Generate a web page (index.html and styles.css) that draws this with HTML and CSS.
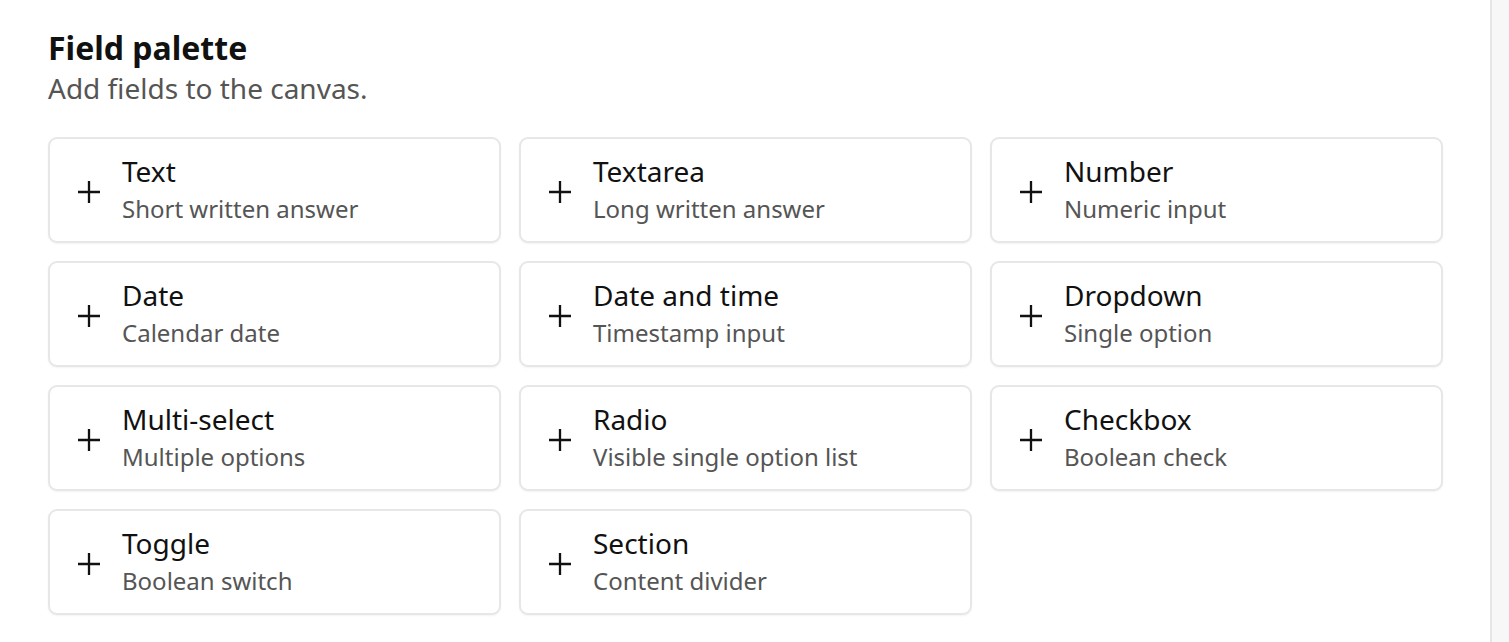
FILE: index.html
```html
<!DOCTYPE html>
<html lang="en">
<head>
<meta charset="utf-8">
<title>Field palette</title>
<link rel="stylesheet" href="styles.css">
</head>
<body>
<div class="layout">
  <aside class="panel">
    <header class="panel-head">
      <h1 class="panel-title">Field palette</h1>
      <p class="panel-sub">Add fields to the canvas.</p>
    </header>
    <div class="grid">
      <button class="card"><svg class="plus" viewBox="0 0 22 22"><path d="M11 0v22M0 11h22"/></svg><span class="card-text"><span class="card-title">Text</span><span class="card-desc">Short written answer</span></span></button>
      <button class="card"><svg class="plus" viewBox="0 0 22 22"><path d="M11 0v22M0 11h22"/></svg><span class="card-text"><span class="card-title">Textarea</span><span class="card-desc">Long written answer</span></span></button>
      <button class="card"><svg class="plus" viewBox="0 0 22 22"><path d="M11 0v22M0 11h22"/></svg><span class="card-text"><span class="card-title">Number</span><span class="card-desc">Numeric input</span></span></button>
      <button class="card"><svg class="plus" viewBox="0 0 22 22"><path d="M11 0v22M0 11h22"/></svg><span class="card-text"><span class="card-title">Date</span><span class="card-desc">Calendar date</span></span></button>
      <button class="card"><svg class="plus" viewBox="0 0 22 22"><path d="M11 0v22M0 11h22"/></svg><span class="card-text"><span class="card-title">Date and time</span><span class="card-desc">Timestamp input</span></span></button>
      <button class="card"><svg class="plus" viewBox="0 0 22 22"><path d="M11 0v22M0 11h22"/></svg><span class="card-text"><span class="card-title">Dropdown</span><span class="card-desc">Single option</span></span></button>
      <button class="card"><svg class="plus" viewBox="0 0 22 22"><path d="M11 0v22M0 11h22"/></svg><span class="card-text"><span class="card-title">Multi-select</span><span class="card-desc">Multiple options</span></span></button>
      <button class="card"><svg class="plus" viewBox="0 0 22 22"><path d="M11 0v22M0 11h22"/></svg><span class="card-text"><span class="card-title">Radio</span><span class="card-desc">Visible single option list</span></span></button>
      <button class="card"><svg class="plus" viewBox="0 0 22 22"><path d="M11 0v22M0 11h22"/></svg><span class="card-text"><span class="card-title">Checkbox</span><span class="card-desc">Boolean check</span></span></button>
      <button class="card"><svg class="plus" viewBox="0 0 22 22"><path d="M11 0v22M0 11h22"/></svg><span class="card-text"><span class="card-title">Toggle</span><span class="card-desc">Boolean switch</span></span></button>
      <button class="card"><svg class="plus" viewBox="0 0 22 22"><path d="M11 0v22M0 11h22"/></svg><span class="card-text"><span class="card-title">Section</span><span class="card-desc">Content divider</span></span></button>
    </div>
  </aside>
  <main class="canvas"></main>
</div>
</body>
</html>
```
FILE: styles.css
```css
* { box-sizing: border-box; }
html, body { margin: 0; padding: 0; height: 100%; }
body {
  font-family: "Noto Sans", "Open Sans", sans-serif;
  background: #f7f7f7;
  color: #111;
}
.layout {
  display: flex;
  min-height: 100%;
}
.panel {
  width: 1492px;
  flex: none;
  background: #fff;
  border-right: 2px solid #e6e6e6;
  padding: 27px 47px 24px 48px;
}
.panel-head { margin-bottom: 30px; }
.panel-title {
  margin: 0;
  font-size: 32px;
  line-height: 42px;
  font-weight: 700;
  color: #111;
}
.panel-sub {
  margin: 0;
  font-size: 28px;
  line-height: 38px;
  color: #555;
}
.grid {
  display: grid;
  grid-template-columns: repeat(3, 1fr);
  gap: 18px;
}
.card {
  display: flex;
  align-items: center;
  gap: 22px;
  height: 106px;
  padding: 0 28px;
  background: #fff;
  border: 2px solid #e7e7e7;
  border-radius: 9px;
  box-shadow: 0 1px 2px rgba(0,0,0,0.05);
  font: inherit;
  text-align: left;
  color: inherit;
  cursor: pointer;
}
.plus {
  width: 22px;
  height: 22px;
  margin-top: 4px;
  flex: none;
  fill: none;
  stroke: #111;
  stroke-width: 2.3;
}
.card-text {
  display: flex;
  flex-direction: column;
}
.card-title {
  font-size: 28px;
  line-height: 37px;
  color: #111;
}
.card-desc {
  font-size: 24px;
  line-height: 38px;
  color: #555;
}
.canvas { flex: 1; }
```
